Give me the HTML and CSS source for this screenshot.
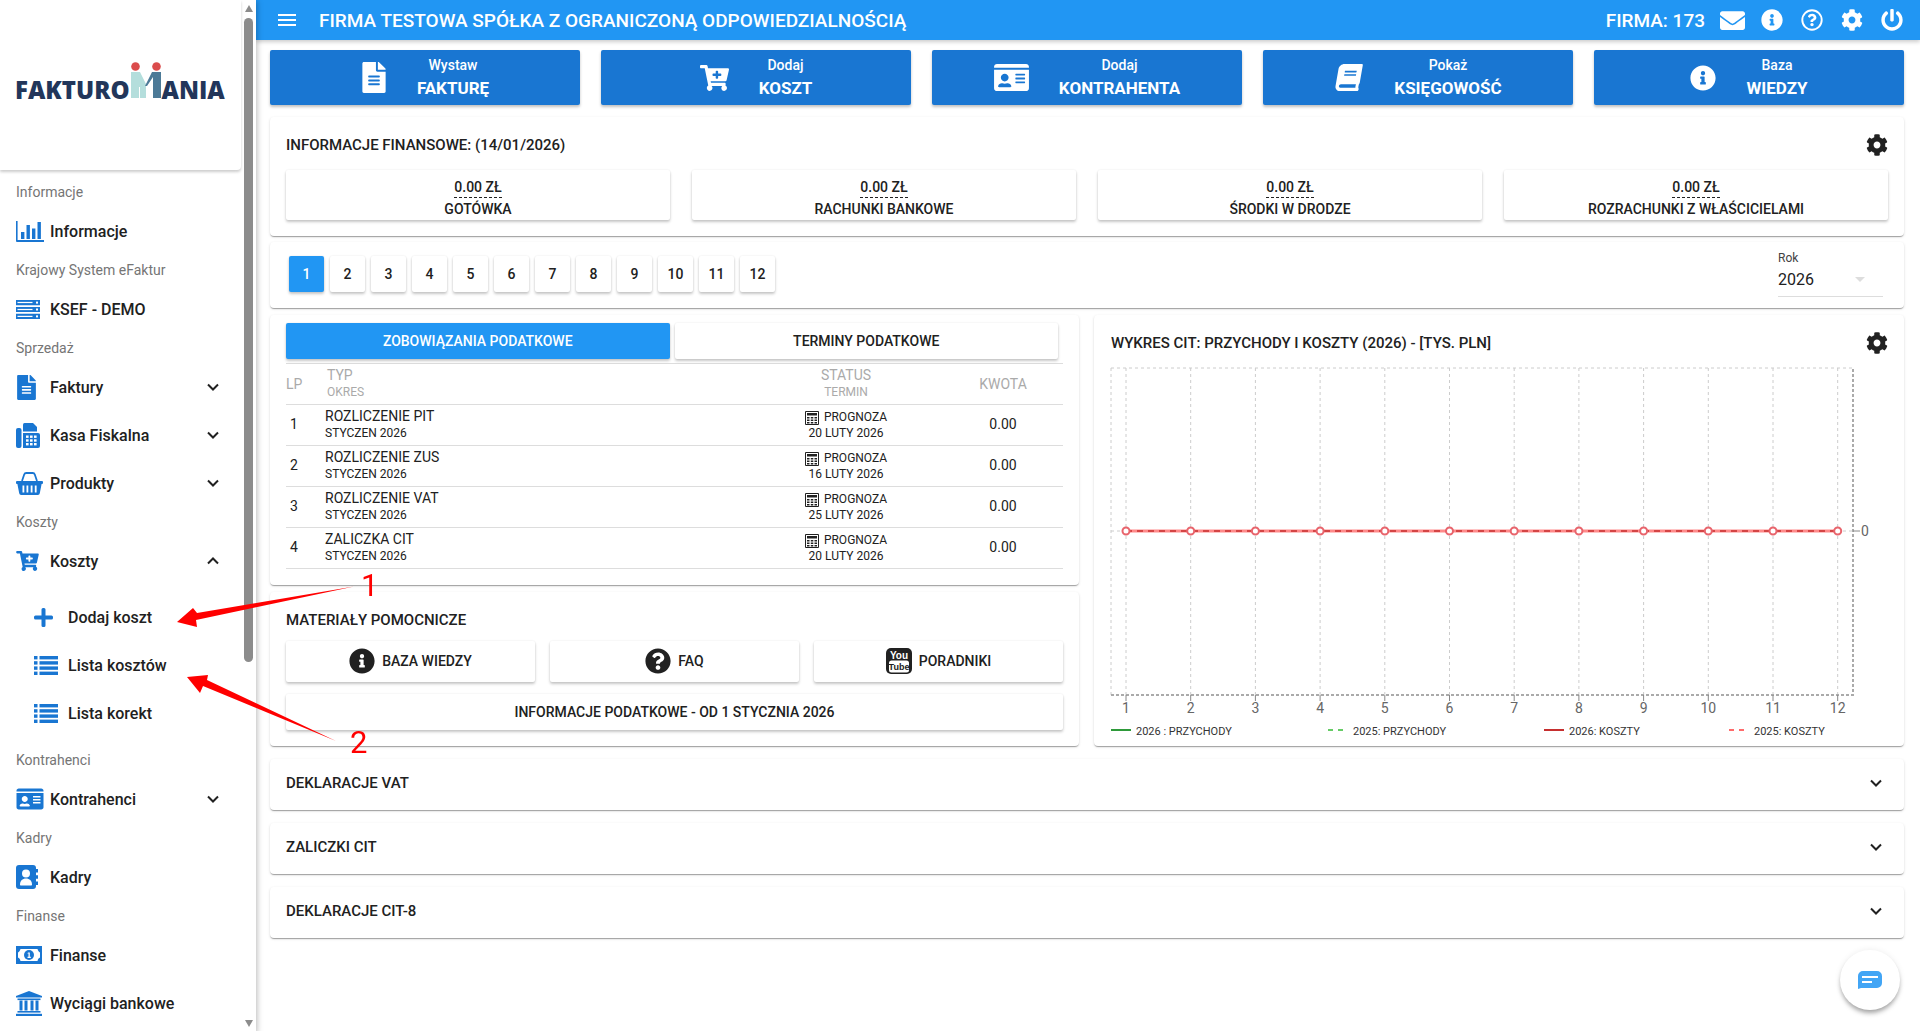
FILE: index.html
```html
<!DOCTYPE html>
<html lang="pl">
<head>
    <meta charset="UTF-8">
    <title>Fakturomania</title>
    <link rel="stylesheet" href="styles.css">
</head>
<body>

<svg class="sprite" xmlns="http://www.w3.org/2000/svg">
    <symbol id="i-file" viewBox="0 0 384 512"><path d="M224 136V0H24C10.7 0 0 10.7 0 24v464c0 13.3 10.7 24 24 24h336c13.3 0 24-10.7 24-24V160H248c-13.2 0-24-10.8-24-24zm64 236c0 6.6-5.4 12-12 12H108c-6.6 0-12-5.4-12-12v-8c0-6.6 5.4-12 12-12h168c6.6 0 12 5.4 12 12v8zm0-64c0 6.6-5.4 12-12 12H108c-6.6 0-12-5.4-12-12v-8c0-6.6 5.4-12 12-12h168c6.6 0 12 5.4 12 12v8zm0-72v8c0 6.6-5.4 12-12 12H108c-6.6 0-12-5.4-12-12v-8c0-6.6 5.4-12 12-12h168c6.6 0 12 5.4 12 12zm96-114.1v6.1H256V0h6.1c6.4 0 12.5 2.5 17 7l97.9 98c4.5 4.5 7 10.6 7 16.9z"/></symbol>
    <symbol id="i-info" viewBox="0 0 512 512"><path d="M256 8C119.043 8 8 119.083 8 256c0 136.997 111.043 248 248 248s248-111.003 248-248C504 119.083 392.957 8 256 8zm0 110c23.196 0 42 18.804 42 42s-18.804 42-42 42-42-18.804-42-42 18.804-42 42-42zm56 254c0 6.627-5.373 12-12 12h-88c-6.627 0-12-5.373-12-12v-24c0-6.627 5.373-12 12-12h12v-64h-12c-6.627 0-12-5.373-12-12v-24c0-6.627 5.373-12 12-12h64c6.627 0 12 5.373 12 12v100h12c6.627 0 12 5.373 12 12v24z"/></symbol>
    <symbol id="i-question" viewBox="0 0 512 512"><path d="M504 256c0 136.997-111.043 248-248 248S8 392.997 8 256C8 119.083 119.043 8 256 8s248 111.083 248 248zM262.655 90c-54.497 0-89.255 22.957-116.549 63.758-3.536 5.286-2.353 12.415 2.715 16.258l34.699 26.31c5.205 3.947 12.621 3.008 16.665-2.122 17.864-22.658 30.113-35.797 57.303-35.797 20.429 0 45.698 13.148 45.698 32.958 0 14.976-12.363 22.667-32.534 33.976C247.128 238.528 216 254.941 216 296v4c0 6.627 5.373 12 12 12h56c6.627 0 12-5.373 12-12v-1.333c0-28.462 83.186-29.647 83.186-106.667 0-58.002-60.165-102-116.531-102zM256 338c-25.365 0-46 20.635-46 46 0 25.364 20.635 46 46 46s46-20.636 46-46c0-25.365-20.635-46-46-46z"/></symbol>
    <symbol id="i-question-o" viewBox="0 0 512 512"><circle cx="256" cy="256" r="226" fill="none" stroke="currentColor" stroke-width="44"/><path d="M262 112c-46 0-76 20-99 54-3 5-2 11 2 14l29 22c4 3 11 3 14-2 15-19 26-30 48-30 18 0 39 11 39 28 0 13-10 19-28 29-20 11-47 25-47 60v4c0 6 4 10 10 10h47c6 0 10-4 10-10v-1c0-24 71-25 71-91 0-49-51-87-96-87zM256 324c-21 0-39 17-39 39s18 39 39 39 39-17 39-39-18-39-39-39z"/></symbol>
    <symbol id="i-cog" viewBox="0 0 512 512"><path d="M487.4 315.7l-42.6-24.6c4.3-23.2 4.3-47 0-70.2l42.6-24.6c4.9-2.8 7.1-8.6 5.5-14-11.1-35.6-30-67.8-54.7-94.6-3.8-4.1-10-5.1-14.8-2.3L380.8 110c-17.9-15.4-38.5-27.3-60.8-35.1V25.8c0-5.6-3.9-10.5-9.4-11.7-36.7-8.2-74.3-7.8-109.2 0-5.5 1.2-9.4 6.1-9.4 11.7V75c-22.2 7.9-42.8 19.8-60.8 35.1L88.7 85.5c-4.9-2.8-11-1.9-14.8 2.3-24.7 26.7-43.6 58.9-54.7 94.6-1.7 5.4.6 11.2 5.5 14L67.3 221c-4.3 23.2-4.3 47 0 70.2l-42.6 24.6c-4.9 2.8-7.1 8.6-5.5 14 11.1 35.6 30 67.8 54.7 94.6 3.8 4.1 10 5.1 14.8 2.3l42.6-24.6c17.9 15.4 38.5 27.3 60.8 35.1v49.2c0 5.6 3.9 10.5 9.4 11.7 36.7 8.2 74.3 7.8 109.2 0 5.5-1.2 9.4-6.1 9.4-11.7v-49.2c22.2-7.9 42.8-19.8 60.8-35.1l42.6 24.6c4.9 2.8 11 1.9 14.8-2.3 24.7-26.7 43.6-58.9 54.7-94.6 1.5-5.5-.7-11.3-5.6-14.1zM256 336c-44.1 0-80-35.9-80-80s35.9-80 80-80 80 35.9 80 80-35.9 80-80 80z"/></symbol>
    <symbol id="i-envelope" viewBox="0 0 512 512"><path d="M502.3 190.8c3.9-3.1 9.7-.2 9.7 4.7V400c0 26.5-21.5 48-48 48H48c-26.5 0-48-21.5-48-48V195.6c0-5 5.7-7.8 9.7-4.7 22.4 17.4 52.1 39.5 154.1 113.6 21.1 15.4 56.7 47.8 92.2 47.6 35.7.3 72-32.8 92.3-47.6 102-74.1 131.6-96.3 154-113.7zM256 320c23.2.4 56.6-29.2 73.4-41.4 132.7-96.3 142.8-104.7 173.4-128.7 5.8-4.5 9.2-11.5 9.2-18.9v-19c0-26.5-21.5-48-48-48H48C21.5 64 0 85.5 0 112v19c0 7.4 3.4 14.3 9.2 18.9 30.6 23.9 40.7 32.4 173.4 128.7 16.8 12.2 50.2 41.8 73.4 41.4z"/></symbol>
    <symbol id="i-power" viewBox="0 0 512 512"><path d="M400 54.1c63 45 104 118.6 104 201.9 0 136.8-110.8 247.7-247.5 248C120 504.3 8.2 393 8 256.4 7.9 173.1 48.9 99.3 111.8 54.2c11.7-8.3 28-4.8 35 7.7L162.6 90c5.9 10.5 3.1 23.8-6.6 31-41.5 30.8-68 79.6-68 134.9-.1 92.3 74.5 168.1 168 168.1 91.6 0 168.6-74.2 168-169.1-.3-51.8-24.7-101.8-68.1-134-9.7-7.2-12.4-20.5-6.5-30.9l15.8-28.1c7-12.4 23.2-16.1 34.8-7.8zM296 264V24c0-13.3-10.7-24-24-24h-32c-13.3 0-24 10.7-24 24v240c0 13.3 10.7 24 24 24h32c13.3 0 24-10.7 24-24z"/></symbol>
    <symbol id="i-cart" viewBox="0 0 576 512"><path d="M504.717 320H211.572l6.545 32h268.418c15.401 0 26.816 14.301 23.403 29.319l-5.517 24.276C523.112 414.668 536 433.828 536 456c0 31.202-25.519 56.444-56.824 55.994-29.823-.429-54.35-24.631-55.155-54.447-.44-16.287 6.085-31.049 16.803-41.548H231.176C241.553 426.165 248 440.326 248 456c0 31.813-26.528 57.431-58.67 55.938-28.54-1.325-51.751-24.385-53.251-52.917-1.158-22.034 10.436-41.455 28.051-51.586L93.883 64H24C10.745 64 0 53.255 0 40V24C0 10.745 10.745 0 24 0h102.529c11.401 0 21.228 8.021 23.513 19.19L159.208 64H551.99c15.401 0 26.816 14.301 23.403 29.319l-47.273 208C525.637 312.246 515.923 320 504.717 320zM408 168h-48v-40c0-8.837-7.163-16-16-16h-16c-8.837 0-16 7.163-16 16v40h-48c-8.837 0-16 7.163-16 16v16c0 8.837 7.163 16 16 16h48v40c0 8.837 7.163 16 16 16h16c8.837 0 16-7.163 16-16v-40h48c8.837 0 16-7.163 16-16v-16c0-8.837-7.163-16-16-16z"/></symbol>
    <symbol id="i-book" viewBox="0 0 520 512"><g transform="translate(78 0) skewX(-10)"><path d="M448 360V24c0-13.3-10.7-24-24-24H96C43 0 0 43 0 96v320c0 53 43 96 96 96h328c13.3 0 24-10.7 24-24v-16c0-7.5-3.5-14.3-8.9-18.7-4.2-15.4-4.2-59.3 0-74.7 5.4-4.3 8.9-11.1 8.9-18.6zM128 134c0-3.3 2.7-6 6-6h212c3.3 0 6 2.7 6 6v20c0 3.3-2.7 6-6 6H134c-3.3 0-6-2.7-6-6v-20zm0 64c0-3.3 2.7-6 6-6h212c3.3 0 6 2.7 6 6v20c0 3.3-2.7 6-6 6H134c-3.3 0-6-2.7-6-6v-20zm253.4 250H96c-17.7 0-32-14.3-32-32 0-17.6 14.4-32 32-32h285.4c-1.9 17.1-1.9 46.9 0 64z"/></g></symbol>
    <symbol id="i-idcard" viewBox="0 0 576 512"><path d="M528 32H48C21.5 32 0 53.5 0 80v16h576V80c0-26.5-21.5-48-48-48zM0 432c0 26.5 21.5 48 48 48h480c26.5 0 48-21.5 48-48V128H0v304zm352-232c0-4.4 3.6-8 8-8h144c4.4 0 8 3.6 8 8v16c0 4.4-3.6 8-8 8H360c-4.4 0-8-3.6-8-8v-16zm0 64c0-4.4 3.6-8 8-8h144c4.4 0 8 3.6 8 8v16c0 4.4-3.6 8-8 8H360c-4.4 0-8-3.6-8-8v-16zm0 64c0-4.4 3.6-8 8-8h144c4.4 0 8 3.6 8 8v16c0 4.4-3.6 8-8 8H360c-4.4 0-8-3.6-8-8v-16zM176 192c35.3 0 64 28.7 64 64s-28.7 64-64 64-64-28.7-64-64 28.7-64 64-64zM67.1 396.2C75.5 370.5 99.6 352 128 352h8.2c12.3 5.1 25.7 8 39.8 8s27.6-2.9 39.8-8h8.2c28.4 0 52.5 18.5 60.9 44.2 3.2 9.9-5.2 19.8-15.6 19.8H82.7c-10.4 0-18.8-10-15.6-19.8z"/></symbol>
    <symbol id="i-chart" viewBox="0 0 28 21"><path d="M0 0h1.6v19H28v2H1a1 1 0 0 1-1-1z"/><rect x="5" y="11" width="3.4" height="7"/><rect x="10.5" y="4" width="3.4" height="14"/><rect x="16" y="7.5" width="3.4" height="10.5"/><rect x="21.5" y="1" width="3.4" height="17"/></symbol>
    <symbol id="i-server" viewBox="0 0 24 19"><path d="M0 0h24v5.2H0zM0 6.9h24v5.2H0zM0 13.8h24V19H0z"/><g fill="#fff"><rect x="1.5" y="1.9" width="15" height="1.2"/><rect x="1.5" y="8.9" width="15" height="1.2"/><rect x="1.5" y="15.8" width="15" height="1.2"/><rect x="20" y="1.6" width="2" height="2"/><rect x="20" y="8.5" width="2" height="2"/><rect x="20" y="15.4" width="2" height="2"/></g></symbol>
    <symbol id="i-kasa" viewBox="0 0 24 25"><rect x="0" y="5" width="5.5" height="20" rx="2"/><path d="M7 1.5A1.5 1.5 0 0 1 8.500 0H17l4 4v4.500H7z"/><path d="M7 10h15a2 2 0 0 1 2 2v11a2 2 0 0 1-2 2H7z"/><g fill="#fff"><rect x="10" y="12.500" width="2.600" height="2.400"/><rect x="14" y="12.500" width="2.600" height="2.400"/><rect x="18" y="12.500" width="2.600" height="2.400"/><rect x="10" y="16.300" width="2.600" height="2.400"/><rect x="14" y="16.300" width="2.600" height="2.400"/><rect x="18" y="16.300" width="2.600" height="2.400"/><rect x="10" y="20" width="2.600" height="2.400"/><rect x="14" y="20" width="2.600" height="2.400"/><rect x="18" y="20" width="2.600" height="2.400"/></g></symbol>
    <symbol id="i-basket" viewBox="0 0 27 24"><path d="M6 10L8.200 3.500A2.200 2.200 0 0 1 10.300 2h6.400a2.200 2.200 0 0 1 2.100 1.500L21 10" fill="none" stroke="currentColor" stroke-width="1.800"/><path d="M1 10h25a1 1 0 0 1 1 1v1a1 1 0 0 1-1 1h-.400l-1.800 9.300A2 2 0 0 1 21.800 24H5.200a2 2 0 0 1-2-1.700L1.400 13H1a1 1 0 0 1-1-1v-1a1 1 0 0 1 1-1z"/><g fill="#fff"><rect x="6.500" y="14.500" width="1.800" height="7"/><rect x="10.500" y="14.500" width="1.800" height="7"/><rect x="14.700" y="14.500" width="1.800" height="7"/><rect x="18.800" y="14.500" width="1.800" height="7"/></g></symbol>
    <symbol id="i-plus" viewBox="0 0 19 19"><path d="M7.500 1.500a1.500 1.500 0 0 1 1.500-1.500h1a1.500 1.500 0 0 1 1.500 1.500V7.500H17.500a1.500 1.500 0 0 1 1.500 1.500v1a1.500 1.500 0 0 1-1.500 1.500H11.500V17.500a1.500 1.500 0 0 1-1.500 1.500H9a1.500 1.500 0 0 1-1.500-1.500V11.500H1.500A1.500 1.500 0 0 1 0 10V9a1.500 1.500 0 0 1 1.500-1.500H7.500z"/></symbol>
    <symbol id="i-list" viewBox="0 0 24 19"><rect x="0" y="0" width="3.500" height="3.400"/><rect x="0" y="5.200" width="3.500" height="3.400"/><rect x="0" y="10.400" width="3.500" height="3.400"/><rect x="0" y="15.600" width="3.500" height="3.400"/><rect x="5.500" y="0" width="18.500" height="3.400"/><rect x="5.500" y="5.200" width="18.500" height="3.400"/><rect x="5.500" y="10.400" width="18.500" height="3.400"/><rect x="5.500" y="15.600" width="18.500" height="3.400"/></symbol>
    <symbol id="i-kadry" viewBox="0 0 22 24"><path d="M3 0h14a3 3 0 0 1 3 3v18a3 3 0 0 1-3 3H3a3 3 0 0 1-3-3V3a3 3 0 0 1 3-3z"/><path d="M20 4h2v3.500h-2zM20 10.200h2v3.500h-2zM20 16.500h2V20h-2z"/><circle cx="10" cy="8.500" r="4" fill="#fff"/><path d="M4 19.500c0-3.800 2.500-6 6-6s6 2.200 6 6c0 .6-.4 1-1 1H5c-.6 0-1-.4-1-1z" fill="#fff"/></symbol>
    <symbol id="i-money" viewBox="0 0 26 18"><path d="M0 0h26v18H0z"/><path d="M4.500 3h17c.5 2 1.500 3 2.500 3.400v5.200c-1 .4-2 1.400-2.500 3.400h-17c-.5-2-1.500-3-2.500-3.400V6.400C3 6 4 5 4.500 3z" fill="#fff"/><circle cx="13" cy="9" r="5"/><path d="M12.400 6.400h1.400v4.400h1v1.100h-3.300v-1.100h1V7.600h-1v-.7z" fill="#fff"/></symbol>
    <symbol id="i-bank" viewBox="0 0 26 25"><path d="M13 0l13 5v1.500H0V5z"/><rect x="1.500" y="7.500" width="23" height="1.600"/><rect x="3.500" y="9.500" width="3" height="10"/><rect x="8.500" y="9.500" width="3" height="10"/><rect x="14.500" y="9.500" width="3" height="10"/><rect x="19.500" y="9.500" width="3" height="10"/><rect x="1.500" y="20" width="23" height="1.600"/><rect x="0" y="22.800" width="26" height="2.200"/></symbol>
    <symbol id="i-calc" viewBox="0 0 14 14"><path d="M.5.500h13v13H.5z" fill="none" stroke="currentColor"/><path d="M2 2h10v2.500H2z"/><path d="M2 6h2.500v1.400H2zM5.800 6h2.500v1.400H5.800zM9.500 6H12v1.400H9.500zM2 8.500h2.500v1.400H2zM5.800 8.500h2.500v1.400H5.800zM9.500 8.500H12v1.400H9.500zM2 11h2.500v1.400H2zM5.800 11h2.500v1.400H5.800zM9.500 11H12v1.400H9.500z"/></symbol>
    <symbol id="i-down" viewBox="0 0 12 8"><path d="M1 1.500l5 5 5-5" fill="none" stroke="currentColor" stroke-width="2"/></symbol>
    <symbol id="i-up" viewBox="0 0 12 8"><path d="M1 6.500l5-5 5 5" fill="none" stroke="currentColor" stroke-width="2"/></symbol>
</svg>

<div class="app">

    <aside class="sidebar">
        <div class="sidebar_col">
            <div class="logo_card">
                <div class="logo">
                    <span>FAKTURO</span>
                    <svg width="30" height="36" viewBox="0 0 30 36">
                        <circle cx="4.500" cy="4.500" r="4.300" fill="#db4c4c"/>
                        <circle cx="25.500" cy="4.500" r="4.300" fill="#db4c4c"/>
                        <path d="M0 10h9l6 12v14h-6V25H8v11H0z" fill="#b4dedc"/>
                        <path d="M30 10h-9l-7 14h2l6-9v21h8z" fill="#4c7a97"/>
                    </svg>
                    <span>ANIA</span>
                </div>
            </div>

            <div class="nav_label">Informacje</div>
            <a class="nav_item"><span class="nav_icon"><svg width="28" height="21"><use href="#i-chart"/></svg></span>Informacje</a>
            <div class="nav_label">Krajowy System eFaktur</div>
            <a class="nav_item"><span class="nav_icon"><svg width="24" height="19"><use href="#i-server"/></svg></span>KSEF - DEMO</a>
            <div class="nav_label">Sprzedaż</div>
            <a class="nav_item"><span class="nav_icon"><svg width="21" height="25"><use href="#i-file"/></svg></span>Faktury<svg class="nav_arrow" width="12" height="8"><use href="#i-down"/></svg></a>
            <a class="nav_item"><span class="nav_icon"><svg width="24" height="25"><use href="#i-kasa"/></svg></span>Kasa Fiskalna<svg class="nav_arrow" width="12" height="8"><use href="#i-down"/></svg></a>
            <a class="nav_item"><span class="nav_icon"><svg width="27" height="24"><use href="#i-basket"/></svg></span>Produkty<svg class="nav_arrow" width="12" height="8"><use href="#i-down"/></svg></a>
            <div class="nav_label">Koszty</div>
            <a class="nav_item"><span class="nav_icon"><svg width="23" height="20"><use href="#i-cart"/></svg></span>Koszty<svg class="nav_arrow" width="12" height="8"><use href="#i-up"/></svg></a>
            <div class="nav_sub">
                <a class="nav_item"><span class="nav_icon"><svg width="19" height="19"><use href="#i-plus"/></svg></span>Dodaj koszt</a>
                <a class="nav_item"><span class="nav_icon"><svg width="24" height="19"><use href="#i-list"/></svg></span>Lista kosztów</a>
                <a class="nav_item"><span class="nav_icon"><svg width="24" height="19"><use href="#i-list"/></svg></span>Lista korekt</a>
            </div>
            <div class="nav_label">Kontrahenci</div>
            <a class="nav_item"><span class="nav_icon"><svg width="28" height="24"><use href="#i-idcard"/></svg></span>Kontrahenci<svg class="nav_arrow" width="12" height="8"><use href="#i-down"/></svg></a>
            <div class="nav_label">Kadry</div>
            <a class="nav_item"><span class="nav_icon"><svg width="22" height="24"><use href="#i-kadry"/></svg></span>Kadry</a>
            <div class="nav_label">Finanse</div>
            <a class="nav_item"><span class="nav_icon"><svg width="26" height="18"><use href="#i-money"/></svg></span>Finanse</a>
            <a class="nav_item"><span class="nav_icon"><svg width="26" height="25"><use href="#i-bank"/></svg></span>Wyciągi bankowe</a>
        </div>
        <div class="scroll">
            <div class="scroll_up"></div>
            <div class="scroll_thumb"></div>
            <div class="scroll_down"></div>
        </div>
    </aside>

    <div class="page">
        <header class="topbar">
            <div class="burger"><i></i><i></i><i></i></div>
            <div class="top_title">FIRMA TESTOWA SPÓŁKA Z OGRANICZONĄ ODPOWIEDZIALNOŚCIĄ</div>
            <div class="top_firma">FIRMA: 173</div>
            <div class="top_icons">
                <span><svg width="25" height="25"><use href="#i-envelope"/></svg></span>
                <span><svg width="22" height="22"><use href="#i-info"/></svg></span>
                <span><svg width="22" height="22"><use href="#i-question-o"/></svg></span>
                <span><svg width="22" height="22"><use href="#i-cog"/></svg></span>
                <span><svg width="22" height="22"><use href="#i-power"/></svg></span>
            </div>
        </header>

        <main class="content">
            <div class="actions">
                <a class="action"><svg width="26" height="31"><use href="#i-file"/></svg><span class="action_txt">Wystaw<b>FAKTURĘ</b></span></a>
                <a class="action"><svg width="29" height="26"><use href="#i-cart"/></svg><span class="action_txt">Dodaj<b>KOSZT</b></span></a>
                <a class="action"><svg width="35" height="31"><use href="#i-idcard"/></svg><span class="action_txt">Dodaj<b>KONTRAHENTA</b></span></a>
                <a class="action"><svg width="30" height="27"><use href="#i-book"/></svg><span class="action_txt">Pokaż<b>KSIĘGOWOŚĆ</b></span></a>
                <a class="action"><svg width="26" height="26"><use href="#i-info"/></svg><span class="action_txt">Baza<b>WIEDZY</b></span></a>
            </div>

            <section class="card fin">
                <div class="card_head">
                    <span>INFORMACJE FINANSOWE: (14/01/2026)</span>
                    <svg class="card_cog" width="22" height="22"><use href="#i-cog"/></svg>
                </div>
                <div class="fin_grid">
                    <div class="tile"><span class="tile_val">0.00 ZŁ</span><span>GOTÓWKA</span></div>
                    <div class="tile"><span class="tile_val">0.00 ZŁ</span><span>RACHUNKI BANKOWE</span></div>
                    <div class="tile"><span class="tile_val">0.00 ZŁ</span><span>ŚRODKI W DRODZE</span></div>
                    <div class="tile"><span class="tile_val">0.00 ZŁ</span><span>ROZRACHUNKI Z WŁAŚCICIELAMI</span></div>
                </div>
            </section>

            <section class="card months">
                <div class="month_list">
                    <button class="month active">1</button>
                    <button class="month">2</button>
                    <button class="month">3</button>
                    <button class="month">4</button>
                    <button class="month">5</button>
                    <button class="month">6</button>
                    <button class="month">7</button>
                    <button class="month">8</button>
                    <button class="month">9</button>
                    <button class="month">10</button>
                    <button class="month">11</button>
                    <button class="month">12</button>
                </div>
                <div class="year">
                    <label>Rok</label>
                    <div class="year_val">2026<i></i></div>
                </div>
            </section>

            <div class="columns">
                <div class="col_left">
                    <section class="card taxes">
                        <div class="tabs">
                            <button class="tab active">ZOBOWIĄZANIA PODATKOWE</button>
                            <button class="tab">TERMINY PODATKOWE</button>
                        </div>
                        <table class="tax_table">
                            <thead>
                                <tr>
                                    <th class="c_lp">LP</th>
                                    <th class="c_typ">TYP<small>OKRES</small></th>
                                    <th class="c_status">STATUS<small>TERMIN</small></th>
                                    <th class="c_kwota">KWOTA</th>
                                </tr>
                            </thead>
                            <tbody>
                                <tr>
                                    <td class="c_lp">1</td>
                                    <td class="c_typ">ROZLICZENIE PIT<small>STYCZEN 2026</small></td>
                                    <td class="c_status"><span class="prog"><svg width="14" height="14"><use href="#i-calc"/></svg>PROGNOZA</span><small>20 LUTY 2026</small></td>
                                    <td class="c_kwota">0.00</td>
                                </tr>
                                <tr>
                                    <td class="c_lp">2</td>
                                    <td class="c_typ">ROZLICZENIE ZUS<small>STYCZEN 2026</small></td>
                                    <td class="c_status"><span class="prog"><svg width="14" height="14"><use href="#i-calc"/></svg>PROGNOZA</span><small>16 LUTY 2026</small></td>
                                    <td class="c_kwota">0.00</td>
                                </tr>
                                <tr>
                                    <td class="c_lp">3</td>
                                    <td class="c_typ">ROZLICZENIE VAT<small>STYCZEN 2026</small></td>
                                    <td class="c_status"><span class="prog"><svg width="14" height="14"><use href="#i-calc"/></svg>PROGNOZA</span><small>25 LUTY 2026</small></td>
                                    <td class="c_kwota">0.00</td>
                                </tr>
                                <tr>
                                    <td class="c_lp">4</td>
                                    <td class="c_typ">ZALICZKA CIT<small>STYCZEN 2026</small></td>
                                    <td class="c_status"><span class="prog"><svg width="14" height="14"><use href="#i-calc"/></svg>PROGNOZA</span><small>20 LUTY 2026</small></td>
                                    <td class="c_kwota">0.00</td>
                                </tr>
                            </tbody>
                        </table>
                    </section>

                    <section class="card helps">
                        <div class="helps_title">MATERIAŁY POMOCNICZE</div>
                        <div class="helps_row">
                            <a class="help_btn"><svg width="26" height="26"><use href="#i-info"/></svg>BAZA WIEDZY</a>
                            <a class="help_btn"><svg width="26" height="26"><use href="#i-question"/></svg>FAQ</a>
                            <a class="help_btn">
                                <svg width="26" height="26" viewBox="0 0 26 26"><rect width="26" height="26" rx="5" fill="#212121"/><text x="13" y="10.500" text-anchor="middle" class="yt_top">You</text><rect x="3" y="12.500" width="20" height="12" rx="2.500" fill="#fff"/><text x="13" y="22" text-anchor="middle" class="yt_bot">Tube</text></svg>
                                PORADNIKI
                            </a>
                        </div>
                        <a class="help_wide">INFORMACJE PODATKOWE - OD 1 STYCZNIA 2026</a>
                    </section>
                </div>

                <section class="card chart">
                    <div class="card_head">
                        <span>WYKRES CIT: PRZYCHODY I KOSZTY (2026) - [TYS. PLN]</span>
                        <svg class="card_cog" width="22" height="22"><use href="#i-cog"/></svg>
                    </div>
                    <svg class="chart_svg" width="810" height="386" viewBox="1094 360 810 386">
                        <g class="grid_v">
                            <path d="M1111 368H1853M1111 368V695M1111 531H1853"/>
                            <path d="M1126 368V695M1190.700 368V695M1255.400 368V695M1320.100 368V695M1384.800 368V695M1449.500 368V695M1514.200 368V695M1578.900 368V695M1643.600 368V695M1708.300 368V695M1773 368V695M1837.700 368V695"/>
                        </g>
                        <path class="grid_frame" d="M1111 695H1853V368"/>
                        <path class="ticks" d="M1126 695v6M1190.700 695v6M1255.400 695v6M1320.100 695v6M1384.800 695v6M1449.500 695v6M1514.200 695v6M1578.900 695v6M1643.600 695v6M1708.300 695v6M1773 695v6M1837.700 695v6M1853 531h7"/>
                        <path class="line_a" d="M1126 531H1837.700"/>
                        <path class="line_b" d="M1126 531H1837.700"/>
                        <g class="dots">
                            <circle cx="1126" cy="531" r="3.500"/><circle cx="1190.700" cy="531" r="3.500"/><circle cx="1255.400" cy="531" r="3.500"/><circle cx="1320.100" cy="531" r="3.500"/><circle cx="1384.800" cy="531" r="3.500"/><circle cx="1449.500" cy="531" r="3.500"/><circle cx="1514.200" cy="531" r="3.500"/><circle cx="1578.900" cy="531" r="3.500"/><circle cx="1643.600" cy="531" r="3.500"/><circle cx="1708.300" cy="531" r="3.500"/><circle cx="1773" cy="531" r="3.500"/><circle cx="1837.700" cy="531" r="3.500"/>
                        </g>
                        <g class="axis_txt" text-anchor="middle">
                            <text x="1126" y="713">1</text><text x="1190.700" y="713">2</text><text x="1255.400" y="713">3</text><text x="1320.100" y="713">4</text><text x="1384.800" y="713">5</text><text x="1449.500" y="713">6</text><text x="1514.200" y="713">7</text><text x="1578.900" y="713">8</text><text x="1643.600" y="713">9</text><text x="1708.300" y="713">10</text><text x="1773" y="713">11</text><text x="1837.700" y="713">12</text>
                            <text x="1865" y="536">0</text>
                        </g>
                        <path d="M1111 730h20" stroke="#2e9a3a" stroke-width="2"/>
                        <path d="M1328 730h16" stroke="#66cc66" stroke-width="2" stroke-dasharray="5 5"/>
                        <path d="M1544 730h20" stroke="#c62f2f" stroke-width="2"/>
                        <path d="M1729 730h16" stroke="#ff6b6b" stroke-width="2" stroke-dasharray="5 5"/>
                        <g class="legend_txt">
                            <text x="1136" y="735">2026 : PRZYCHODY</text>
                            <text x="1353" y="735">2025: PRZYCHODY</text>
                            <text x="1569" y="735">2026: KOSZTY</text>
                            <text x="1754" y="735">2025: KOSZTY</text>
                        </g>
                    </svg>
                </section>
            </div>

            <section class="card accordion">DEKLARACJE VAT<svg width="12" height="8"><use href="#i-down"/></svg></section>
            <section class="card accordion">ZALICZKI CIT<svg width="12" height="8"><use href="#i-down"/></svg></section>
            <section class="card accordion">DEKLARACJE CIT-8<svg width="12" height="8"><use href="#i-down"/></svg></section>
        </main>
    </div>
</div>

<button class="chat">
    <svg width="24" height="18" viewBox="0 0 24 18"><path d="M5 0h14a5 5 0 0 1 5 5v7a5 5 0 0 1-5 5H3l-3 1V5a5 5 0 0 1 5-5z" fill="#42a5f5"/><path d="M4 6h16M4 11h10" stroke="#fff" stroke-width="2"/></svg>
</button>

<!-- czerwone strzalki z instrukcji -->
<svg class="notes" width="1920" height="1031" viewBox="0 0 1920 1031">
    <path d="M354 586.500L197 613 193 608 177 622 197 627 196 620z" fill="#f00"/>
    <path d="M336 741L207 680 208 675 187 677 200 693 203 686z" fill="#f00"/>
    <text x="361" y="596" class="note_txt">1</text>
    <text x="350" y="753" class="note_txt">2</text>
</svg>

</body>
</html>
```

FILE: styles.css
```css
* {
    box-sizing: border-box;
}

html, body {
    margin: 0;
    height: 100%;
    overflow: hidden;
    background-color: #fff;
    font-family: Roboto, "Liberation Sans", sans-serif;
    color: #212121;
}

svg {
    fill: currentColor;
    flex: none;
}

.sprite {
    display: none;
}

button {
    font-family: inherit;
    border: 0;
    padding: 0;
}

.app {
    display: flex;
    height: 1031px;
}

/* menu boczne */
.sidebar {
    width: 256px;
    flex: none;
    display: flex;
    position: relative;
    z-index: 3;
    background-color: #fff;
    box-shadow: 0 2px 6px 1px rgba(0, 0, 0, .28);
    overflow: hidden;
}

.sidebar_col {
    width: 241px;
    flex: none;
}

.logo_card {
    height: 170px;
    padding: 62px 0 0 15px;
    border-radius: 0 0 4px 0;
    box-shadow: 0 2px 3px rgba(0, 0, 0, .2);
    margin-bottom: 7px;
}

.logo {
    display: flex;
    align-items: flex-end;
    gap: 1px;
    height: 36px;
    font-family: "Open Sans", sans-serif;
    font-weight: 800;
    font-size: 24px;
    line-height: 16px;
    color: #22365a;
}

.nav_label {
    height: 30px;
    padding-left: 16px;
    font-size: 14px;
    line-height: 30px;
    color: #757575;
}

.nav_item {
    display: flex;
    align-items: center;
    height: 48px;
    padding-left: 16px;
    font-size: 16px;
    font-weight: 500;
    color: #212121;
}

.nav_icon {
    width: 34px;
    flex: none;
    display: flex;
    color: #1976d2;
}

.nav_arrow {
    margin-left: auto;
    margin-right: 22px;
    color: #212121;
}

.nav_sub {
    padding: 8px 0;
}

.nav_sub .nav_item {
    padding-left: 34px;
}

.scroll {
    width: 9px;
    margin-left: 3px;
    display: flex;
    flex-direction: column;
    align-items: center;
}

.scroll_up, .scroll_down {
    width: 0;
    height: 0;
    border-left: 4.500px solid transparent;
    border-right: 4.500px solid transparent;
}

.scroll_up {
    margin-top: 5px;
    border-bottom: 7px solid #8c8c8c;
}

.scroll_thumb {
    width: 9px;
    height: 644px;
    margin-top: 6px;
    background-color: #8c8c8c;
    border-radius: 5px;
}

.scroll_down {
    margin-top: auto;
    margin-bottom: 4px;
    border-top: 7px solid #8c8c8c;
}

/* gorny pasek */
.page {
    flex: 1;
    min-width: 0;
}

.topbar {
    display: flex;
    align-items: center;
    height: 40px;
    background-color: #2196f3;
    color: #fff;
    position: relative;
    box-shadow: 0 2px 4px rgba(0, 0, 0, .2);
    font-size: 19px;
    font-weight: 500;
}

.burger {
    width: 18px;
    margin-left: 22px;
    display: flex;
    flex-direction: column;
    gap: 3px;
}

.burger i {
    display: block;
    height: 2px;
    background-color: #fff;
}

.top_title {
    margin-left: 23px;
}

.top_firma {
    margin-left: auto;
    margin-right: 7px;
}

.top_icons {
    display: flex;
    margin-right: 8px;
}

.top_icons span {
    width: 40px;
    display: flex;
    justify-content: center;
    align-items: center;
}

/* zawartosc */
.content {
    padding: 10px 16px 0 14px;
}

.actions {
    display: grid;
    grid-template-columns: repeat(5, 1fr);
    gap: 21px;
    margin-bottom: 12px;
}

.action {
    height: 55px;
    display: flex;
    justify-content: center;
    align-items: center;
    gap: 30px;
    background-color: #1976d2;
    border-radius: 2px;
    color: #fff;
    box-shadow: 0 2px 3px rgba(0, 0, 0, .25);
}

.action_txt {
    display: flex;
    flex-direction: column;
    align-items: center;
    padding-bottom: 1px;
    font-size: 14px;
    font-weight: 500;
    line-height: 23px;
}

.action_txt b {
    font-size: 17px;
    font-weight: 700;
}

.card {
    background-color: #fff;
    border-radius: 4px;
    box-shadow: 0 2px 1px -1px rgba(0, 0, 0, .2), 0 1px 1px 0 rgba(0, 0, 0, .14), 0 1px 3px 0 rgba(0, 0, 0, .12);
}

.card_head {
    display: flex;
    justify-content: space-between;
    align-items: center;
    font-size: 15px;
    font-weight: 500;
}

.card_cog {
    color: #212121;
}

.fin {
    height: 119px;
    padding: 0 16px;
    margin-bottom: 6px;
}

.fin .card_head {
    height: 53px;
    padding-top: 2px;
}

.fin_grid {
    display: grid;
    grid-template-columns: repeat(4, 1fr);
    gap: 22px;
}

.tile {
    height: 50px;
    display: flex;
    flex-direction: column;
    align-items: center;
    padding-top: 9px;
    border-radius: 2px;
    font-size: 14px;
    font-weight: 500;
    line-height: 17px;
    box-shadow: 0 2px 3px rgba(0, 0, 0, .22), 0 0 2px rgba(0, 0, 0, .08);
}

.tile_val {
    height: 19px;
    margin-bottom: 3px;
    border-bottom: 1px dashed #212121;
}

.months {
    height: 66px;
    display: flex;
    justify-content: space-between;
    padding: 14px 21px 0 19px;
    margin-bottom: 7px;
}

.month_list {
    display: flex;
    gap: 6px;
    height: 36px;
}

.month {
    width: 35px;
    height: 36px;
    background-color: #fff;
    border-radius: 2px;
    font-size: 14px;
    font-weight: 500;
    color: #212121;
    box-shadow: 0 2px 3px rgba(0, 0, 0, .22), 0 0 2px rgba(0, 0, 0, .08);
}

.month.active {
    background-color: #2196f3;
    color: #fff;
}

.year {
    width: 105px;
    margin-top: -7px;
    font-size: 12px;
}

.year label {
    display: block;
    line-height: 18px;
    color: #424242;
}

.year_val {
    display: flex;
    justify-content: space-between;
    align-items: center;
    height: 30px;
    padding: 0 18px 4px 0;
    font-size: 16px;
    color: #212121;
    border-bottom: 1px solid #ddd;
}

.year_val i {
    width: 0;
    height: 0;
    border-left: 5px solid transparent;
    border-right: 5px solid transparent;
    border-top: 5px solid #ddd;
}

.columns {
    display: grid;
    grid-template-columns: 809px 810px;
    gap: 15px;
    margin-bottom: 13px;
}

.col_left {
    display: flex;
    flex-direction: column;
    gap: 7px;
}

.taxes {
    height: 270px;
    padding: 8px 16px 0;
}

.tabs {
    display: flex;
    gap: 5px;
    padding-right: 5px;
}

.tab {
    flex: 1;
    height: 36px;
    padding-bottom: 1px;
    background-color: #fff;
    border-radius: 2px;
    font-size: 14px;
    font-weight: 500;
    color: #212121;
    box-shadow: 0 2px 3px rgba(0, 0, 0, .22), 0 0 2px rgba(0, 0, 0, .08);
}

.tab.active {
    background-color: #2196f3;
    color: #fff;
}

.tax_table {
    width: 100%;
    margin-top: 4px;
    border-collapse: collapse;
    table-layout: fixed;
    border-top: 1px solid #ddd;
}

.tax_table th {
    height: 41px;
    padding: 0;
    font-size: 14px;
    font-weight: 400;
    line-height: 17px;
    color: #aaa;
    text-align: left;
    border-bottom: 1px solid #ddd;
}

.tax_table td {
    height: 41px;
    padding: 0;
    font-size: 14px;
    line-height: 17px;
    border-bottom: 1px solid #ddd;
}

.tax_table small {
    display: block;
    font-size: 12px;
}

.tax_table .c_lp {
    width: 39px;
}

.tax_table td.c_lp {
    padding: 0 0 2px 4px;
}

.tax_table th.c_typ {
    padding-left: 2px;
}

.tax_table .c_status {
    width: 194px;
    text-align: center;
}

.tax_table .c_kwota {
    width: 120px;
    text-align: center;
}

.tax_table td.c_kwota {
    padding-bottom: 2px;
}

.prog {
    display: flex;
    justify-content: center;
    align-items: center;
    gap: 5px;
    height: 17px;
    padding-top: 2px;
    font-size: 12px;
    color: #212121;
}

.helps {
    height: 154px;
    padding: 0 16px;
}

.helps_title {
    height: 49px;
    line-height: 56px;
    font-size: 15px;
    font-weight: 500;
}

.helps_row {
    display: grid;
    grid-template-columns: repeat(3, 1fr);
    gap: 15px;
    margin-bottom: 12px;
}

.help_btn {
    height: 41px;
    display: flex;
    justify-content: center;
    align-items: center;
    gap: 7px;
    padding-bottom: 1px;
    font-size: 14px;
    font-weight: 500;
    border-radius: 2px;
    box-shadow: 0 2px 3px rgba(0, 0, 0, .22), 0 0 2px rgba(0, 0, 0, .08);
}

.yt_top, .yt_bot {
    font-family: "Liberation Sans", sans-serif;
    font-weight: 700;
}

.yt_top {
    font-size: 10px;
    fill: #fff;
}

.yt_bot {
    font-size: 9px;
    fill: #212121;
}

.help_wide {
    height: 36px;
    display: flex;
    justify-content: center;
    align-items: center;
    font-size: 14px;
    font-weight: 500;
    border-radius: 2px;
    box-shadow: 0 2px 3px rgba(0, 0, 0, .22), 0 0 2px rgba(0, 0, 0, .08);
}

.chart {
    height: 431px;
    padding-top: 0;
}

.chart .card_head {
    height: 45px;
    padding: 11px 16px 0 17px;
}

.chart_svg {
    display: block;
    fill: none;
}

.grid_v path {
    stroke: #ccc;
    stroke-width: 1;
    stroke-dasharray: 3 3;
}

.grid_frame {
    stroke: #aaa;
    stroke-width: 2;
    stroke-dasharray: 3 2;
}

.ticks {
    stroke: #888;
}

.line_a {
    stroke: #ff8a8a;
    stroke-width: 3;
}

.line_b {
    stroke: #c62f2f;
    stroke-width: 1.500;
    stroke-dasharray: 6 5;
}

.dots circle {
    fill: #fff;
    stroke: #e8646c;
    stroke-width: 2;
}

.axis_txt text {
    fill: #666;
    font-size: 14px;
}

.legend_txt text {
    fill: #333;
    font-size: 11px;
}

.accordion {
    height: 51px;
    display: flex;
    justify-content: space-between;
    align-items: center;
    padding: 0 22px 3px 16px;
    margin-bottom: 13px;
    font-size: 15px;
    font-weight: 500;
}

.chat {
    position: fixed;
    left: 1840px;
    top: 950px;
    z-index: 5;
    width: 60px;
    height: 60px;
    display: flex;
    justify-content: center;
    align-items: center;
    border-radius: 50%;
    background-color: #fff;
    box-shadow: 0 4px 5px -1px rgba(0, 0, 0, .35), 0 0 6px rgba(0, 0, 0, .08);
}

.notes {
    position: fixed;
    left: 0;
    top: 0;
    z-index: 10;
    pointer-events: none;
}

.note_txt {
    font-size: 31px;
    fill: #f00;
}
```
